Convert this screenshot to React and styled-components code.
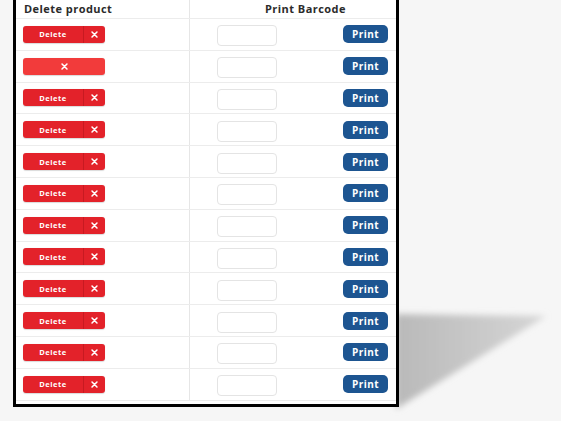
import React from "react";
import styled, { createGlobalStyle } from "styled-components";

const GlobalStyle = createGlobalStyle`
  html, body {
    margin: 0;
    padding: 0;
    background: #f6f6f6;
    font-family: "Open Sans", "Liberation Sans", sans-serif;
  }
`;

const Page = styled.div`
  position: relative;
  width: 561px;
  height: 421px;
  overflow: hidden;
`;

const Shadow = styled.svg`
  position: absolute;
  left: 0;
  top: 0;
  z-index: 0;
`;

const Panel = styled.div`
  position: relative;
  z-index: 1;
  margin-left: 13px;
  width: 380px;
  background: #fff;
  border: 3px solid #000;
  border-top: none;
  padding-bottom: 3px;
`;

const Row = styled.div`
  display: grid;
  grid-template-columns: 174px 1fr;
  height: ${(p) => p.$h}px;
  border-bottom: 1px solid #ececec;
  box-sizing: border-box;
`;

const Cell = styled.div`
  display: flex;
  align-items: center;
  padding: 0 8px 0 7px;
  border-right: ${(p) => (p.$first ? "1px solid #e6e6e6" : "none")};
`;

const HeadText = styled.span`
  font-size: 11px;
  font-weight: 700;
  color: #2b2b2b;
  letter-spacing: 0.45px;
  padding-left: ${(p) => p.$pl || 1}px;
  margin-top: -1px;
`;

const DeleteBtn = styled.div`
  display: flex;
  width: 82px;
  height: 17px;
  border-radius: 3px;
  overflow: hidden;
  background: ${(p) => (p.$only ? "#f23b3b" : "#e3222a")};
  color: #fff;
  box-shadow: 0 0.5px 1px rgba(0, 0, 0, 0.15);
`;

const DelLabel = styled.span`
  flex: 0 0 60px;
  display: flex;
  align-items: center;
  justify-content: center;
  font-size: 7.5px;
  font-weight: 700;
  letter-spacing: 0.5px;
  border-right: 1px solid #c81a21;
`;

const XPart = styled.span`
  flex: 1;
  display: flex;
  align-items: center;
  justify-content: center;
`;

const BarcodeCell = styled(Cell)`
  justify-content: space-between;
  padding-left: 27px;
`;

const Input = styled.div`
  width: 58px;
  height: 19px;
  margin-top: 3px;
  border: 1px solid #e4e4e4;
  border-radius: 4px;
  background: #fff;
`;

const PrintBtn = styled.div`
  width: 45px;
  height: 18px;
  border-radius: 5px;
  background: #1d5591;
  color: #fff;
  font-size: 10px;
  font-weight: 700;
  display: flex;
  align-items: center;
  justify-content: center;
  letter-spacing: 0.4px;
`;

const Cross = () => (
  <svg width="7" height="7" viewBox="0 0 10 10">
    <path d="M1.5 1.5 L8.5 8.5 M8.5 1.5 L1.5 8.5" stroke="#fff" strokeWidth="2.2" strokeLinecap="round" />
  </svg>
);

const rows = Array.from({ length: 12 }, (_, i) => i);

export default function App() {
  return (
    <Page>
      <GlobalStyle />
      <Shadow width="561" height="421">
        <defs>
          <linearGradient id="sg" x1="0" y1="0" x2="1" y2="0">
            <stop offset="0" stopColor="#b9b9b9" />
            <stop offset="1" stopColor="#d6d6d6" />
          </linearGradient>
          <filter id="bl" x="-20%" y="-20%" width="140%" height="140%">
            <feGaussianBlur stdDeviation="3" />
          </filter>
        </defs>
        <polygon points="396,314 546,316 396,409" fill="url(#sg)" filter="url(#bl)" />
      </Shadow>
      <Panel>
        <Row $h={19}>
          <Cell $first>
            <HeadText>Delete product</HeadText>
          </Cell>
          <Cell>
            <HeadText $pl={68}>Print Barcode</HeadText>
          </Cell>
        </Row>
        {rows.map((i) => (
          <Row key={i} $h={31.8}>
            <Cell $first>
              {i === 1 ? (
                <DeleteBtn $only>
                  <XPart>
                    <Cross />
                  </XPart>
                </DeleteBtn>
              ) : (
                <DeleteBtn>
                  <DelLabel>Delete</DelLabel>
                  <XPart>
                    <Cross />
                  </XPart>
                </DeleteBtn>
              )}
            </Cell>
            <BarcodeCell>
              <Input />
              <PrintBtn>Print</PrintBtn>
            </BarcodeCell>
          </Row>
        ))}
      </Panel>
    </Page>
  );
}
